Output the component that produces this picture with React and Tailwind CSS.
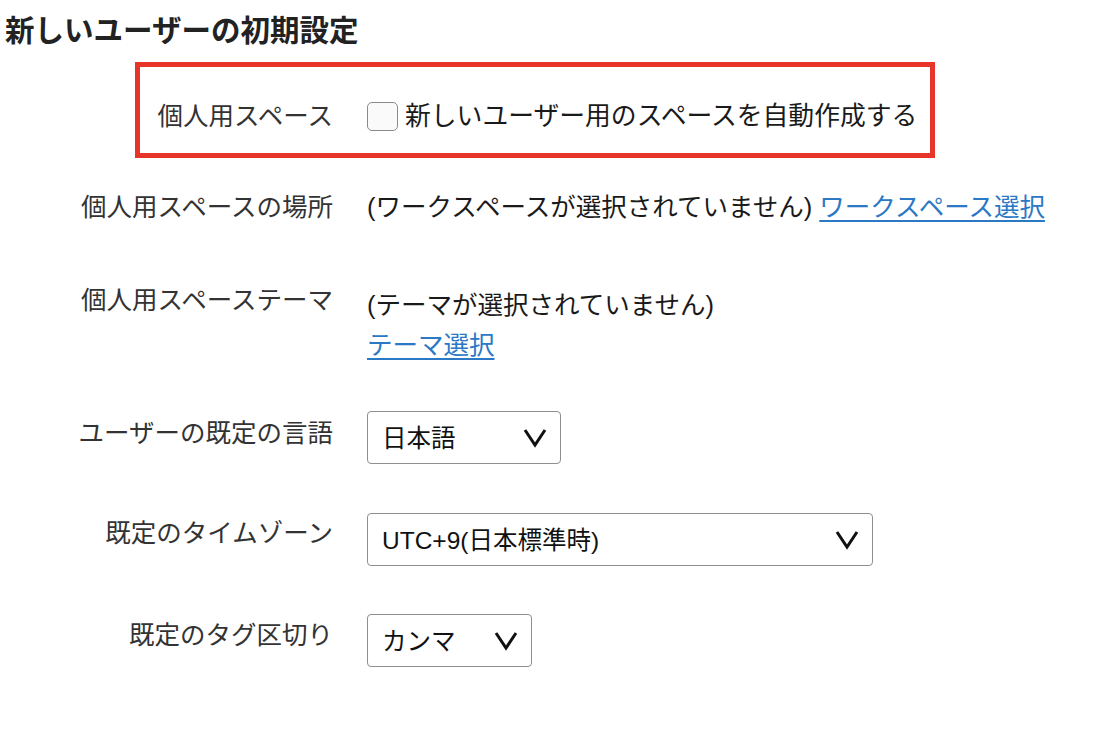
import React from "react";

const FONT = { fontFamily: '"Liberation Sans", "Noto Sans CJK JP", sans-serif' };

function Chevron() {
  return (
    <svg width="24" height="20" viewBox="0 0 24 20" fill="none">
      <polyline points="2,2 12,17 22,2" stroke="#111" strokeWidth="3" strokeLinejoin="miter" strokeLinecap="butt" />
    </svg>
  );
}

function Select({ value, width }) {
  return (
    <div className={`${width} h-[53px] border border-[#8f8f8f] rounded-[4px] bg-white flex items-center justify-between pl-[14px] pr-[13px]`}>
      <span className="text-[24.5px] text-[#111] leading-none pt-[4px]">{value}</span>
      <Chevron />
    </div>
  );
}

function Label({ children, className = "" }) {
  return (
    <div className={`w-[333px] shrink-0 text-right text-[25.5px] leading-[36px] text-[#333] ${className}`}>{children}</div>
  );
}

export default function App() {
  return (
    <div className="w-[1110px] h-[730px] bg-white overflow-hidden" style={FONT}>
      <div className="pl-[5px] pt-[11px] text-[29.5px] font-bold leading-[39px] text-[#222]">新しいユーザーの初期設定</div>

      <div className="ml-[135px] mt-[12px] w-[800px] h-[96px] border-[5px] border-[#e8352a] flex items-start pt-[29px]">
        <div className="w-[193px] shrink-0 text-right text-[25.5px] leading-[36px] text-[#333] mt-[2px]">個人用スペース</div>
        <div className="ml-[34px] flex items-center h-[40px]">
          <div className="w-[31px] h-[29px] border-[1.5px] border-[#8a8a8a] rounded-[5px] bg-[#fafafa]" />
          <span className="ml-[7px] text-[25.8px] text-[#1a1a1a] leading-[36px]">新しいユーザー用のスペースを自動作成する</span>
        </div>
      </div>

      <div className="mt-[31px] flex items-start">
        <Label>個人用スペースの場所</Label>
        <div className="ml-[34px] text-[25.5px] leading-[36px] text-[#1a1a1a]">
          (ワークスペースが選択されていません){" "}
          <a className="text-[#2b78c5] underline underline-offset-[4px]" href="#">ワークスペース選択</a>
        </div>
      </div>

      <div className="mt-[57px] flex items-start">
        <Label>個人用スペーステーマ</Label>
        <div className="ml-[34px] mt-[3px] text-[25.5px] leading-[40px] text-[#1a1a1a]">
          <div>(テーマが選択されていません)</div>
          <a className="text-[#2b78c5] underline underline-offset-[4px]" href="#">テーマ選択</a>
        </div>
      </div>

      <div className="mt-[46px] flex items-start">
        <Label className="mt-[4px]">ユーザーの既定の言語</Label>
        <div className="ml-[34px]"><Select value="日本語" width="w-[194px]" /></div>
      </div>

      <div className="mt-[49px] flex items-start">
        <Label className="mt-[2px]">既定のタイムゾーン</Label>
        <div className="ml-[34px]"><Select value="UTC+9(日本標準時)" width="w-[506px]" /></div>
      </div>

      <div className="mt-[48px] flex items-start">
        <Label className="mt-[3px]">既定のタグ区切り</Label>
        <div className="ml-[34px]"><Select value="カンマ" width="w-[165px]" /></div>
      </div>
    </div>
  );
}
